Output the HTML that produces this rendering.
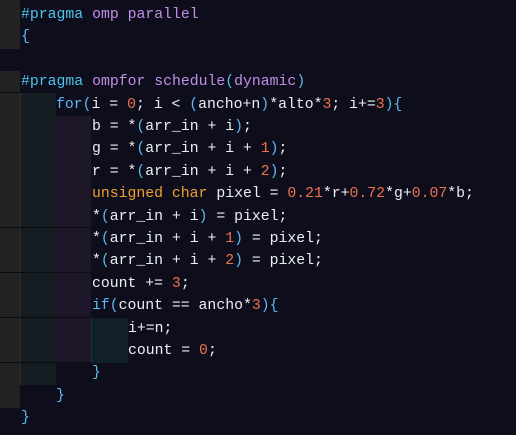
<!DOCTYPE html>
<html><head><style>
html,body{margin:0;padding:0}
body{width:516px;height:435px;background:#0e0d1c;position:relative;overflow:hidden;font-family:"Liberation Mono",monospace;font-size:14.8px;color:#eceff4}
.b{position:absolute}
.l{position:absolute;left:0;height:22.4px;line-height:22.4px;white-space:pre}
.p{color:#4fc3ee}.k{color:#c38fe6}.n{color:#f0714f}.o{color:#f0a030}.c{color:#5cb8f0}
.h{position:absolute;height:1px;background:#0b0b12}
</style></head><body>
<div class="b" style="left:0;top:0;width:20px;height:49px;background:#222222"></div>
<div class="b" style="left:0;top:71px;width:20px;height:337px;background:#222222"></div>
<div class="b" style="left:20px;top:93px;width:35px;height:292px;background:#151d23;border-left:1px solid #2a2d30"></div>
<div class="b" style="left:56px;top:116px;width:35px;height:247px;background:#1d1729"></div>
<div class="b" style="left:91px;top:318px;width:36px;height:45px;background:#11202a;border-left:1px solid #1e3038"></div>
<div class="h" style="left:0;top:92px;width:20px"></div>
<div class="h" style="left:0;top:227px;width:91px"></div>
<div class="h" style="left:0;top:272px;width:91px"></div>
<div class="h" style="left:0;top:317px;width:127px"></div>
<div class="h" style="left:0;top:362px;width:91px"></div>

<div class="l" style="top:4px;left:21px"><span class="p">#pragma</span> <span class="k">omp parallel</span></div>
<div class="l" style="top:26.4px;left:21px"><span class="c">{</span></div>
<div class="l" style="top:71.2px;left:21px"><span class="p">#pragma</span> <span class="k">ompfor schedule</span><span class="c">(</span><span class="k">dynamic</span><span class="c">)</span></div>
<div class="l" style="top:93.6px;left:56px"><span class="c">for(</span>i = <span class="n">0</span>; i &lt; <span class="c">(</span>ancho+n<span class="c">)</span>*alto*<span class="n">3</span>; i+=<span class="n">3</span><span class="c">){</span></div>
<div class="l" style="top:116px;left:92px">b = *<span class="c">(</span>arr_in + i<span class="c">)</span>;</div>
<div class="l" style="top:138.4px;left:92px">g = *<span class="c">(</span>arr_in + i + <span class="n">1</span><span class="c">)</span>;</div>
<div class="l" style="top:160.8px;left:92px">r = *<span class="c">(</span>arr_in + i + <span class="n">2</span><span class="c">)</span>;</div>
<div class="l" style="top:183.2px;left:92px"><span class="o">unsigned char</span> pixel = <span class="n">0.21</span>*r+<span class="n">0.72</span>*g+<span class="n">0.07</span>*b;</div>
<div class="l" style="top:205.6px;left:92px">*<span class="c">(</span>arr_in + i<span class="c">)</span> = pixel;</div>
<div class="l" style="top:228px;left:92px">*<span class="c">(</span>arr_in + i + <span class="n">1</span><span class="c">)</span> = pixel;</div>
<div class="l" style="top:250.4px;left:92px">*<span class="c">(</span>arr_in + i + <span class="n">2</span><span class="c">)</span> = pixel;</div>
<div class="l" style="top:272.8px;left:92px">count += <span class="n">3</span>;</div>
<div class="l" style="top:295.2px;left:92px"><span class="c">if(</span>count == ancho*<span class="n">3</span><span class="c">){</span></div>
<div class="l" style="top:317.6px;left:128px">i+=n;</div>
<div class="l" style="top:340px;left:128px">count = <span class="n">0</span>;</div>
<div class="l" style="top:362.4px;left:92px"><span class="c">}</span></div>
<div class="l" style="top:384.8px;left:56px"><span class="c">}</span></div>
<div class="l" style="top:407.2px;left:21px"><span class="c">}</span></div>
</body></html>
